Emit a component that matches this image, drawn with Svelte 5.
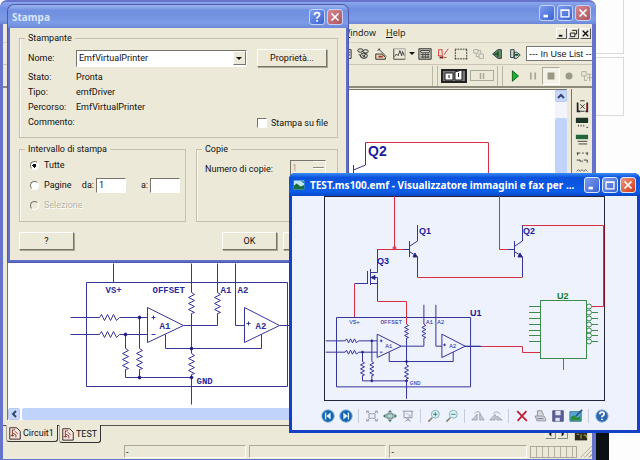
<script lang="ts">
  type Shape = { d: string; s?: string; f?: string; w?: number };

  let printer = $state("EmfVirtualPrinter");
  let toFile = $state(false);
  let range = $state("all");
  let from = $state("1");
  let to = $state("");

  // zigzag bodies of the resistors, relative paths
  const ZIG_H = "l2 -3 l3 6 l3 -6 l3 6 l3 -6 l3 6 l3 -3";
  const ZIG_V = "l3 2 l-6 3 l6 3 l-6 3 l6 3 l-6 3 l6 3 l-3 1";

  const pins = [110.5, 116.5, 122.5, 128.5, 134.5, 139.5, 145.5];

  // 16x16 toolbar glyphs
  const icons: Record<string, Shape[]> = {
    sheet: [{ d: "M9 3h6v10h-6zM10 6h4M10 9h4", s: "#222" }],
    gears: [
      { d: "M2 4a3 2 0 1 0 6 0a3 2 0 1 0-6 0M8 5a3 2 0 1 0 6 0a3 2 0 1 0-6 0M5 10a4 3 0 1 0 8 0a4 3 0 1 0-8 0", s: "#222", f: "#d8d8c8" },
      { d: "M3 8l3 3M7 9l4 3M11 8l-3 4", s: "#222" },
    ],
    wizard: [{ d: "M5 2l9 9M4 4l3-2M2 8h7l4 4v2H2z", s: "#222", f: "#e8d8b0" }, { d: "M5 11h5", s: "#a33", w: 2 }],
    graph: [{ d: "M2 2v12h13M3 11l2-3 2 2 2-6 2 6 1-5 2 5", s: "#333" }, { d: "M2 2h13v12", s: "#999" }],
    calc: [
      { d: "M1 2h14v12H1z", s: "#222", f: "#c9c7b8" },
      { d: "M3 4h10v2H3z", s: "#333", f: "#fff" },
      { d: "M3 8.500h10M3 11.500h10", s: "#333" },
      { d: "M5.500 7v6M8.500 7v6M11.500 7v6", s: "#444" },
    ],
    erc: [{ d: "M3 3v7M3 3h4v6M2 10h6v3M9 9l5-7M9 12h3", s: "#c33" }, { d: "M4 12h4", s: "#622", w: 2 }],
    area: [{ d: "M1 2.500h2m1 0h2m1 0h2m1 0h2m1 0h2M1 13.500h2m1 0h2m1 0h2m1 0h2m1 0h2M1.500 3v2m0 1v2m0 1v2m0 1v2M14.500 3v2m0 1v2m0 1v2m0 1v2", s: "#222" }],
    copy: [{ d: "M2 3h5v4H2zM8 8h5v5H8zM5 7v4h3M10 8V4H7", s: "#aaa89a" }],
    back: [{ d: "M13 3h-4l-6 5 6 5h4z", s: "#234", f: "#6a8a6a" }, { d: "M5 8h5M9 5v6", s: "#175a2a", w: 2 }],
    forward: [{ d: "M3 3h4v9H3zM7 6h3l4 3-4 4H7z", s: "#234", f: "#cdd8c4" }, { d: "M8 9h4", s: "#175a2a", w: 2 }],
    play: [{ d: "M5 2l7 6-7 6z", s: "#0a5a14", f: "#16b32c" }],
    pause: [{ d: "M5.500 4v8M10.500 4v8", s: "#aaa899", w: 2 }],
    stop: [{ d: "M4 4h8v8H4z", f: "#9a9888" }],
    record: [{ d: "M4 8a4 4 0 1 0 8 0a4 4 0 1 0-8 0", f: "#9a9888" }],
    step: [{ d: "M2 3h5v5H2zM8 6h5M8 10h6M5 8v5h3M11 6v8", s: "#aaa89a" }],
    first: [{ d: "M1 8a7 7 0 1 0 14 0a7 7 0 1 0-14 0", f: "#1765ad", s: "#5f9bd0" }, { d: "M11 4v8L6 8zM4.500 4h1.500v8h-1.500z", f: "#dff4ff" }],
    last: [{ d: "M1 8a7 7 0 1 0 14 0a7 7 0 1 0-14 0", f: "#1765ad", s: "#5f9bd0" }, { d: "M5 4v8l5-4zM10 4h1.500v8H10z", f: "#dff4ff" }],
    fit: [{ d: "M2 5V2.500h3M11 2.500h3V5M2 11v2.500h3M11 13.500h3V11M4.500 5.500h7v5h-7zM2 2l3 3M14 2l-3 3M2 14l3-3M14 14l-3-3", s: "#8b929c" }],
    actual: [{ d: "M4.500 5.500h7v5h-7z", s: "#567", f: "#b8dcc8" }, { d: "M0 8l3-2.500v5zM16 8l-3-2.500v5zM8 1l2.500 3h-5zM8 15l2.500-3h-5z", f: "#3d7a6a" }],
    slide: [{ d: "M2 2.500h12M3.500 3v7h9V3M8 10v3M5 14l3-2 3 2", s: "#858c98" }, { d: "M6 5l5 3-5 3", s: "#a8afba" }],
    zoomIn: [{ d: "M6 10L1.500 14.500", s: "#8a8578", w: 2 }, { d: "M5 6a4.500 4.500 0 1 0 9 0a4.500 4.500 0 1 0-9 0", s: "#7fa7b4", f: "#dff3f6" }, { d: "M7 6h5M9.500 3.500v5", s: "#24727a" }],
    zoomOut: [{ d: "M6 10L1.500 14.500", s: "#8a8578", w: 2 }, { d: "M5 6a4.500 4.500 0 1 0 9 0a4.500 4.500 0 1 0-9 0", s: "#7fa7b4", f: "#dff3f6" }, { d: "M7 6h5", s: "#24727a" }],
    rotR: [{ d: "M1 12.500h6L7 6zM10 5v7.500h5z", s: "#999ea8", f: "#c9cdd6" }, { d: "M4 5q4-4 7 0", s: "#999ea8" }],
    rotL: [{ d: "M1 12.500h6L7 6zM9 12.500h6L9 8z", s: "#999ea8", f: "#c9cdd6" }, { d: "M5 5q4-4 8 1", s: "#999ea8" }],
    del: [{ d: "M2.500 2.500l11 11M13 2.500l-10 11", s: "#c01c30", w: 2 }],
    print: [{ d: "M5 8V2h5l2 5M2.500 8h10l2 3v2.500h-10z", s: "#888d96", f: "#d5d7dc" }, { d: "M5 11h7", s: "#70757e" }],
    save: [{ d: "M2 2h12v12H2z", f: "#5a5f94", s: "#484c80" }, { d: "M5 2h6v5H5zM5 10h5v4H5z", f: "#dfe3f2" }],
    edit: [
      { d: "M1 3h13v11H1z", f: "#58a7d8", s: "#357b8d" },
      { d: "M2 13V9l4-2 4 3 3-2v5z", f: "#2f8a3c" },
      { d: "M8 8l7-7", s: "#25558a", w: 2 },
    ],
    help: [{ d: "M1 8a7 7 0 1 0 14 0a7 7 0 1 0-14 0", f: "#2c68ae", s: "#7fa9d6" }, { d: "M5.500 6q0-2.500 2.500-2.500t2.500 2.200q0 1.500-2.500 2.800v1M8 11v1.500", s: "#fff", w: 2 }],
    bjt: [{ d: "M3 4v10h3M14 4v10h-2", s: "#222", w: 2 }, { d: "M6 2h5M6 6l5 5M11 6l-5 5M6 14h5", s: "#222" }, { d: "M13.500 5v8", s: "#b44" }],
    chipDark: [{ d: "M1 2h14v6H1z", f: "#1d3325" }, { d: "M4 10v2M7 10v2M10 10v2M13 13h2", s: "#333" }],
    chipGreen: [{ d: "M1 2h14v5H1z", f: "#23663a" }, { d: "M3 9.500h11M4 12.500h10", s: "#333" }],
    pads: [{ d: "M3 3v3M2 3.500h4M8 3.500h2M12 3.500h3M14 3v3M2 11.500h4v2M8 12v2M10 11.500h4v3", s: "#333" }],
    mesh: [{ d: "M2 5l2-2 2 2 2-2 2 2 2-2 2 2M2 9l2-2 2 2 2-2 2 2 2-2 2 2", s: "#555" }],
    meter: [{ d: "M1 4h14v9H1z", f: "#2a2a1c" }, { d: "M3 6h3M8 6v5M11 7h3v3", s: "#c9c14a" }],
    doc: [{ d: "M2 2h8l4 4v9H2z", s: "#2a1414", f: "#f3e6dc" }, { d: "M5 4v8M5 5l3-1M5 8l4 2v3M8 6l3 3M3 11h4", s: "#8a2f2f" }],
    picture: [{ d: "M1 2h14v12H1z", f: "#bfe4ef" }, { d: "M1 14V9l4-3 5 4 5-2v6z", f: "#16703f" }, { d: "M1 3h9l5 3v-3z", f: "#1f8f86" }],
  };

  const mainTools = ["sheet", "gears", "wizard", "graph", "|", "calc", "erc", "area", "copy", "back", "forward"];
  const simTools = ["play", "pause", "stop", "record", "step"];
  const partTools = ["bjt", "chipDark", "chipGreen", "pads", "mesh"];
  const viewTools = [
    "first", "last", "|", "fit", "actual", "slide", "|", "zoomIn", "zoomOut", "|",
    "rotR", "rotL", "|", "del", "print", "save", "edit", "|", "help",
  ];
</script>

{#snippet icon(name: string)}
  <svg class="icon" viewBox="0 0 16 16" aria-hidden="true">
    {#each icons[name] as p}
      <path d={p.d} fill={p.f ?? "none"} stroke={p.s ?? "none"} stroke-width={p.w ?? 1} />
    {/each}
  </svg>
{/snippet}

{#snippet winButtons()}
  <div class="win-buttons">
    <button class="wb" aria-label="Minimize"><svg viewBox="0 0 16 16"><path d="M4 11.500h5" stroke-width="3" /></svg></button>
    <button class="wb" aria-label="Maximize"><svg viewBox="0 0 16 16"><path d="M3.500 4.500h9v8h-9zM3 5h10" stroke-width="1.500" /></svg></button>
    <button class="wb close" aria-label="Close"><svg viewBox="0 0 16 16"><path d="M4 4l8 8M12 4l-8 8" stroke-width="2" /></svg></button>
  </div>
{/snippet}

<!-- Instrumentation amplifier, 201x104 body with its pins -->
{#snippet amplifier()}
  <g class="amp">
    <rect x="0" y="0" width="201" height="104" />
    <path d="M27 -19V0" />
    <path d="M105 -19V10{ZIG_V}V71{ZIG_V}V122" />
    <path d="M131 -19V10{ZIG_V}V43H97" />
    <path d="M149 -19V43H158" />
    <path d="M-16 35H13{ZIG_H}H61" />
    <path d="M-16 52H13{ZIG_H}H61" />
    <path d="M39 52V66{ZIG_V}V95H105" />
    <path d="M53 35V66{ZIG_V}V95" />
    <path d="M61 25V60L97 43Z" />
    <path d="M158 25V60L193 43ZM193 43H216" />
    <path d="M79 52V66H175V52" />
    <circle cx="53" cy="35" r="1.500" />
    <circle cx="39" cy="52" r="1.500" />
    <circle cx="53" cy="95" r="1.500" />
    <circle cx="105" cy="66" r="1.500" />
    <circle cx="105" cy="95" r="1.500" />
    <text x="19" y="10">VS+</text>
    <text x="66" y="10">OFFSET</text>
    <text x="134" y="10">A1</text>
    <text x="151" y="10">A2</text>
    <text x="73" y="46">A1</text>
    <text x="169" y="46">A2</text>
    <text x="110" y="101">GND</text>
    <path d="M65 35h4M67 33v4M65 52h4M160 41h4M162 39v4" />
  </g>
{/snippet}

{#snippet transistor(x: number)}
  <g class="blue" transform="translate({x} 0)">
    <path d="M-6 53.500H0M0.500 45V61M1 50L8.500 45V29M1 56L8.500 60.500V81" />
    <path class="solid" d="M8 61l-4 0l2 -4z" />
  </g>
{/snippet}

<div class="desktop">
  <div class="ghost one"></div>
  <div class="ghost two"></div>
  <div class="wall"></div>

  <main class="app">
    <header class="titlebar app-title">{@render winButtons()}</header>
    <nav class="menubar">
      <a href="#window"><u>W</u>indow</a>
      <a href="#help"><u>H</u>elp</a>
      <div class="mdi">
        <button aria-label="Minimize document"><svg viewBox="0 0 10 10"><path d="M2 7.500h4" stroke-width="2" /></svg></button>
        <button aria-label="Restore document"><svg viewBox="0 0 10 10"><path d="M3.500 1.500h5v4h-2M1.500 4.500h5v4h-5z" /></svg></button>
        <button aria-label="Close document"><svg viewBox="0 0 10 10"><path d="M2 2l6 6M8 2l-6 6" stroke-width="1.500" /></svg></button>
      </div>
    </nav>
    <div class="toolbar">
      {#each mainTools as t}
        {#if t === "|"}
          <span class="drop"></span>
        {:else}
          <button class="tool" aria-label={t}>{@render icon(t)}</button>
        {/if}
      {/each}
      <select class="in-use" aria-label="In use list"><option>--- In Use List ---</option></select>
    </div>
    <div class="toolbar sim">
      <span class="grip"></span>
      <button class="switch" aria-label="Simulation switch">
        <svg viewBox="0 0 26 14">
          <path d="M1 1h24v12H1z" fill="#777" stroke="#222" stroke-width="2" />
          <path d="M4 4h8v7H4zM14 3l7-2v10h-7z" fill="#fff" stroke="#222" />
          <path d="M8 6v3M17.500 4v4" stroke="#222" />
        </svg>
      </button>
      <button class="hold" aria-label="Pause simulation"><svg viewBox="0 0 12 10"><path d="M4.500 2v6M7.500 2v6" stroke="#aaa899" stroke-width="1.500" /></svg></button>
      <span class="grip"></span>
      {#each simTools as t}
        <button class="tool" class:sunken={t === "stop"} aria-label={t}>{@render icon(t)}</button>
      {/each}
    </div>

    <div class="workspace">
      <div class="document">
        <div class="sheet">
          <svg class="schematic">
            <g transform="translate(78.500 192.500)">{@render amplifier()}</g>
            <path class="red" d="M357.500 52.500H480.500V120" />
            <path class="blue" d="M357.500 52.500V75L345.500 80M345.500 75V100" />
            <text class="ref" x="360" y="66">Q2</text>
          </svg>
          <div class="vscroll">
            <button aria-label="Scroll up"><svg viewBox="0 0 10 10"><path d="M2 7l3-3 3 3" /></svg></button>
            <span class="vthumb"></span>
          </div>
        </div>
        <div class="hscroll">
          <button aria-label="Scroll left"><svg viewBox="0 0 10 10"><path d="M7 2L4 5l3 3" /></svg></button>
          <span class="hthumb"></span>
        </div>
      </div>
      <aside class="parts">
        {#each partTools as t}
          <button class="tool" aria-label={t}>{@render icon(t)}</button>
        {/each}
      </aside>
    </div>

    <div class="tabs">
      <button class="tab">{@render icon("doc")}Circuit1</button>
      <button class="tab active">{@render icon("doc")}TEST</button>
      <div class="tab-scroll">
        <button aria-label="Previous tab"><svg viewBox="0 0 10 10"><path d="M6 2v6L3 5z" /></svg></button>
        <button aria-label="Next tab"><svg viewBox="0 0 10 10"><path d="M4 2v6l3-3z" /></svg></button>
      </div>
      <button class="tool meter" aria-label="meter">{@render icon("meter")}</button>
    </div>
    <footer class="status">
      <span class="cell lead"></span>
      <span class="cell">-</span>
      <span class="cell"></span>
      <span class="cell">-</span>
      <span class="ticks"></span>
      <span class="resize"></span>
    </footer>
  </main>

  <form class="dialog" onsubmit={(e) => e.preventDefault()}>
    <header class="titlebar dialog-title">
      <h1>Stampa</h1>
      <div class="win-buttons">
        <button type="button" class="wb" aria-label="Help"><svg viewBox="0 0 16 16"><path d="M5 6q0-3 3-3t3 2.500q0 1.500-3 3.500v1M8 11.500v2" stroke-width="2" /></svg></button>
        <button type="button" class="wb close" aria-label="Close"><svg viewBox="0 0 16 16"><path d="M4 4l8 8M12 4l-8 8" stroke-width="2" /></svg></button>
      </div>
    </header>
    <div class="dialog-body">
      <fieldset class="printer">
        <legend>Stampante</legend>
        <label for="printer">Nome:</label>
        <div class="combo">
          <select id="printer" bind:value={printer}><option>EmfVirtualPrinter</option></select>
          <span class="combo-btn"></span>
        </div>
        <button type="button" class="push">Proprietà...</button>
        <span>Stato:</span><span class="wide">Pronta</span>
        <span>Tipo:</span><span class="wide">emfDriver</span>
        <span>Percorso:</span><span class="wide">EmfVirtualPrinter</span>
        <span>Commento:</span><span></span>
        <label class="check"><input type="checkbox" bind:checked={toFile} />Stampa su file</label>
      </fieldset>
      <div class="columns">
        <fieldset class="range">
          <legend>Intervallo di stampa</legend>
          <label class="radio"><input type="radio" value="all" bind:group={range} />Tutte</label>
          <div class="pages">
            <label class="radio"><input type="radio" value="pages" bind:group={range} />Pagine</label>
            <label class="bound" for="from">da:</label><input id="from" class="num" bind:value={from} />
            <label class="bound" for="to">a:</label><input id="to" class="num" bind:value={to} />
          </div>
          <label class="radio off"><input type="radio" value="sel" disabled bind:group={range} />Selezione</label>
        </fieldset>
        <fieldset class="copies">
          <legend>Copie</legend>
          <label for="copies">Numero di copie:</label>
          <div class="spin">
            <input id="copies" value="1" disabled />
            <span class="spin-btns"></span>
          </div>
        </fieldset>
      </div>
      <div class="actions">
        <button type="button" class="push">?</button>
        <button type="submit" class="push ok">OK</button>
        <button type="button" class="push" aria-label="Annulla"></button>
      </div>
    </div>
  </form>

  <section class="viewer">
    <header class="titlebar viewer-title">
      {@render icon("picture")}
      <h2>TEST.ms100.emf - Visualizzatore immagini e fax per ...</h2>
      {@render winButtons()}
    </header>
    <div class="viewer-body">
      <svg class="preview" viewBox="0 0 281 205">
        <rect class="page" x="0.500" y="0.500" width="280" height="204" />
        <g transform="translate(12.500 121.500) scale(0.667)">{@render amplifier()}</g>
        {@render transistor(85)}
        {@render transistor(190)}
        <g class="blue">
          <path d="M53.500 53V76.500H46M46.500 73V89M43.500 75V88M46 81.500H53.500V105M46 87.500H53.500M30.500 87.500H43" />
          <path class="solid" d="M47 81.500l4 -2v4z" />
          <path d="M141 150.500H158" />
        </g>
        <g class="red">
          <path d="M70.500 0V53.500M53.500 53.500H79" />
          <circle cx="70.500" cy="52" r="1.500" />
          <path d="M175.500 0V53.500H184M93.500 81.500H198.500" />
          <path d="M198.500 29.500H279.500V110.500H268" />
          <path class="dark" d="M280.500 29V111" />
          <path d="M30.500 88V121M53.500 105.500H82.500V128" />
          <path d="M157 150.500H198.500V156.500H216" />
        </g>
        <g class="green">
          <rect x="216.500" y="104.500" width="46" height="58" />
          {#each pins as y, i}
            <path d="M205 {y}H216" />
            <circle cx="265" cy={y} r="2.500" />
            {#if i > 0}<path d="M268 {y}H274" />{/if}
          {/each}
          <path d="M239.500 162V174" />
        </g>
        <text class="ref" x="95" y="38">Q1</text>
        <text class="ref" x="199" y="38">Q2</text>
        <text class="ref" x="53" y="68">Q3</text>
        <text class="ref" x="146" y="120">U1</text>
        <text class="ref chip" x="233" y="103">U2</text>
      </svg>
      <div class="viewer-tools">
        {#each viewTools as t}
          {#if t === "|"}
            <span class="sep"></span>
          {:else}
            <button aria-label={t}>{@render icon(t)}</button>
          {/if}
        {/each}
      </div>
    </div>
  </section>
</div>

<style>
  :global(body) {
    margin: 0;
    background: #fdfdfe;
  }
  .desktop {
    position: relative;
    min-height: 100vh;
    overflow: hidden;
    font-family: "Roboto", sans-serif;
    font-size: 9px;
    line-height: 12px;
    color: #111;
  }
  .desktop * {
    box-sizing: border-box;
  }
  button, input, select {
    font: inherit;
    color: inherit;
    margin: 0;
    padding: 0;
    border: 0;
    border-radius: 0;
    background: none;
  }
  .icon {
    display: block;
    width: 14px;
    height: 14px;
    flex: none;
  }

  /* windows and pages behind */
  .ghost {
    position: absolute;
    right: 16px;
    width: 40px;
    border: 1px solid #d9dade;
  }
  .ghost.one { top: -2px; height: 56px; }
  .ghost.two { top: 57px; height: 59px; }
  .wall {
    position: absolute;
    right: 31px;
    bottom: 0;
    width: 20px;
    height: 40px;
    background: #0b1014;
  }

  /* title bars */
  .titlebar {
    display: flex;
    align-items: center;
    flex: none;
  }
  .win-buttons {
    display: flex;
    gap: 2px;
    margin-left: auto;
  }
  .wb {
    width: 16px;
    height: 16px;
    border: 1px solid #c3d2f5;
    border-radius: 3px;
    background: linear-gradient(135deg, #7d9cee, #3a62d4);
  }
  .wb.close {
    background: linear-gradient(135deg, #d58a92, #b0525e);
  }
  .wb svg {
    display: block;
    width: 14px;
    height: 14px;
    fill: none;
    stroke: #fff;
  }

  /* main application */
  .app {
    position: relative;
    display: flex;
    flex-direction: column;
    height: 100vh;
    margin-right: 44px;
    padding: 2px 4px 1px 3px;
    background: #6773cb;
    border-radius: 7px 7px 0 0;
  }
  .app-title {
    height: 22px;
    margin: 0 -4px 0 -3px;
    padding-right: 5px;
    border-radius: 6px 6px 0 0;
    background: linear-gradient(#8aa6ec, #6f8fe0 30%, #7b9be6 80%, #6c86d6);
  }
  .menubar {
    display: flex;
    align-items: center;
    height: 19px;
    padding-left: 339px;
    gap: 10px;
    background: #ece9d8;
    border-bottom: 1px solid #d6d2c0;
    font-family: "Open Sans", sans-serif;
    flex: none;
  }
  .menubar a {
    color: inherit;
    text-decoration: none;
  }
  .mdi {
    display: flex;
    gap: 1px;
    margin-left: auto;
    padding-right: 1px;
  }
  .mdi button {
    width: 11px;
    height: 11px;
    border: 1px solid;
    border-color: #fff #555 #555 #fff;
    background: #ece9d8;
  }
  .mdi svg {
    display: block;
    width: 9px;
    height: 9px;
    fill: none;
    stroke: #111;
  }
  .toolbar {
    display: flex;
    align-items: center;
    justify-content: flex-end;
    height: 22px;
    background: #ece9d8;
    border-bottom: 1px solid #c9c5b2;
    flex: none;
  }
  .tool {
    display: flex;
    align-items: center;
    justify-content: center;
    width: 18px;
    height: 18px;
    flex: none;
  }
  .tool.sunken {
    border: 1px solid;
    border-color: #aca899 #fff #fff #aca899;
    background: #f4f2e8;
  }
  .drop {
    width: 8px;
    height: 3px;
    background: #111;
    clip-path: polygon(1px 0, 7px 0, 4px 3px);
  }
  .in-use {
    appearance: none;
    width: 66px;
    height: 15px;
    margin-left: 2px;
    padding: 0 0 0 2px;
    border: 1px solid #777;
    border-width: 1px 0 1px 1px;
    background: #fff;
    font-family: "Liberation Sans", sans-serif;
    font-size: 9px;
    overflow: hidden;
    text-overflow: clip;
    white-space: nowrap;
  }
  .sim {
    height: 23px;
    border-bottom: 2px solid #8d8a7c;
    overflow: hidden;
  }
  .sim .tool:last-child {
    margin-right: -4px;
  }
  .grip {
    width: 6px;
    height: 20px;
    margin: 0 3px;
    border: 1px solid #bab6a4;
    border-width: 0 1px;
    flex: none;
  }
  .switch svg {
    display: block;
    width: 26px;
    height: 14px;
  }
  .hold {
    display: flex;
    justify-content: center;
    align-items: center;
    width: 24px;
    height: 11px;
    margin-left: 3px;
    border: 1px solid #aaa899;
  }
  .hold svg {
    width: 12px;
    height: 10px;
  }

  .workspace {
    display: flex;
    flex: 1;
    min-height: 0;
    padding: 1px 0 0 4px;
    background: #ece9d8;
  }
  .document {
    display: flex;
    flex-direction: column;
    flex: 1;
    min-width: 0;
    margin-right: 4px;
    border: 1px solid #77756a;
    border-width: 1px 0 0 1px;
    background: #fff;
  }
  .sheet {
    display: flex;
    flex: 1;
    min-height: 0;
  }
  .schematic {
    flex: 1;
    min-width: 0;
    height: 100%;
  }
  .vscroll {
    display: flex;
    flex-direction: column;
    gap: 16px;
    width: 12px;
    background: #f3f3fb;
  }
  .vscroll button, .hscroll button {
    width: 12px;
    height: 12px;
    border: 1px solid #b4c8f6;
    border-radius: 2px;
    background: #c8d8fc;
    flex: none;
  }
  .vscroll svg, .hscroll svg {
    display: block;
    width: 10px;
    height: 10px;
    fill: none;
    stroke: #33466f;
    stroke-width: 2;
  }
  .vthumb, .hthumb {
    flex: 1;
    border-radius: 2px;
    background: #bfd3fb;
  }
  .hscroll {
    display: flex;
    gap: 2px;
    height: 12px;
    flex: none;
  }
  .parts {
    display: flex;
    flex-direction: column;
    align-items: center;
    width: 21px;
    padding-top: 8px;
    border-left: 1px solid #77756a;
  }
  .parts .tool {
    height: 17px;
  }

  .tabs {
    display: flex;
    align-items: flex-start;
    height: 24px;
    padding-left: 3px;
    border-top: 5px solid #ece9d8;
    background: #ece9d8;
    box-shadow: inset 0 1px #55534a;
    flex: none;
  }
  .tab {
    display: flex;
    align-items: center;
    gap: 1px;
    height: 17px;
    padding: 0 3px 0 1px;
    border: 1px solid #333;
    border-top: 0;
    border-left-color: #aaa899;
    border-radius: 0 0 3px 3px;
    background: #ece9d8;
  }
  .tab.active {
    height: 18px;
    margin-left: 1px;
  }
  .tab-scroll {
    display: flex;
    gap: 1px;
    margin-left: auto;
    padding-top: 4px;
  }
  .tab-scroll button {
    width: 11px;
    height: 10px;
    border: 1px solid;
    border-color: #fff #888 #888 #fff;
  }
  .tab-scroll svg {
    display: block;
    width: 9px;
    height: 8px;
  }
  .meter {
    margin: 2px 2px 0 4px;
  }
  .status {
    display: flex;
    align-items: center;
    gap: 3px;
    height: 15px;
    background: #ece9d8;
    flex: none;
  }
  .cell {
    flex: 137 0 0;
    height: 13px;
    padding-left: 1px;
    border: 1px solid;
    border-color: #aca899 #fff #fff #aca899;
  }
  .cell.lead {
    flex-grow: 117;
    border-color: transparent;
  }
  .cell.lead + .cell {
    flex-grow: 121;
  }
  .ticks {
    width: 47px;
    height: 12px;
    border: 1px solid #aca899;
    background: repeating-linear-gradient(90deg, transparent 0 5px, #b5b19f 5px 6px);
  }
  .resize {
    width: 12px;
    height: 12px;
    background: repeating-linear-gradient(135deg, transparent 0 2px, #aca899 2px 3px);
    clip-path: polygon(100% 0, 100% 100%, 0 100%);
  }

  /* schematics */
  .amp, .blue, .red, .green, .page {
    fill: none;
    stroke-width: 1;
  }
  .amp, .blue {
    stroke: #35359a;
  }
  .amp * {
    vector-effect: non-scaling-stroke;
  }
  .amp circle, .solid {
    fill: #14145a;
  }
  .amp text {
    fill: #2c2c9c;
    stroke: none;
    font: bold 9px "Liberation Mono", monospace;
  }
  .red { stroke: #d62f42; }
  .dark { stroke: #7d1028; }
  .green { stroke: #3c8a4c; }
  .page { stroke: #23233c; }
  .ref {
    fill: #1c1c9c;
    font: bold 14px "Liberation Sans", sans-serif;
  }
  .preview .ref { font-size: 9px; }
  .preview .chip { fill: #157a2c; }
  .preview .amp text { font-weight: normal; }

  /* print dialog */
  .dialog {
    position: absolute;
    left: 8px;
    top: 5px;
    width: 340px;
    padding: 0 2px 2px;
    border-radius: 6px 6px 0 0;
    background: #5f6fc9;
    box-shadow: 0 0 0 1px #4c58ad;
  }
  .dialog-title {
    height: 23px;
    margin: 0 -2px;
    padding: 0 5px 0 4px;
    border-radius: 6px 6px 0 0;
    background: linear-gradient(#9db5f0, #6f8fe0 25%, #7b9be6 80%, #6c86d6);
  }
  h1, h2 {
    margin: 0;
    font: bold 10px "Noto Sans", sans-serif;
    color: #dbe5fb;
    white-space: nowrap;
  }
  .dialog-body {
    padding: 4px 8px 10px 9px;
    background: #ece9d8;
  }
  fieldset {
    min-width: 0;
    margin: 0;
    padding: 0 0 0 8px;
    border: 1px solid #c4c0ac;
    box-shadow: inset 1px 0 #fbfaf4;
  }
  legend {
    margin-left: -3px;
    padding: 0 3px;
  }
  .printer {
    display: grid;
    grid-template-columns: 48px 181px 70px;
    grid-template-rows: 22px repeat(4, 15px);
    align-items: center;
    padding-top: 3px;
    padding-bottom: 8px;
  }
  .wide {
    grid-column: 2 / 4;
  }
  .combo {
    position: relative;
    width: 171px;
  }
  .combo select {
    appearance: none;
    display: block;
    width: 100%;
    height: 17px;
    padding-left: 2px;
    border: 1px solid;
    border-color: #77756a #fff #fff #77756a;
    background: #fff;
  }
  .combo-btn {
    position: absolute;
    right: 1px;
    top: 1px;
    width: 13px;
    height: 14px;
    border: 1px solid;
    border-color: #fff #77756a #77756a #fff;
    background: #ece9d8;
    pointer-events: none;
  }
  .combo-btn::after {
    content: "";
    position: absolute;
    left: 2px;
    top: 5px;
    border: 3px solid transparent;
    border-top-color: #111;
  }
  .push {
    height: 18px;
    border: 1px solid;
    border-color: #fff #77756a #77756a #fff;
    background: #ece9d8;
    box-shadow: 1px 1px #a9a695;
  }
  .check, .radio {
    display: flex;
    align-items: center;
    gap: 5px;
    white-space: nowrap;
  }
  .check {
    padding-top: 3px;
    gap: 4px;
  }
  .check input {
    appearance: none;
    width: 10px;
    height: 10px;
    border: 1px solid;
    border-color: #77756a #fff #fff #77756a;
    background: #fff;
    flex: none;
  }
  .check input:checked {
    background: #444;
  }
  .columns {
    display: grid;
    grid-template-columns: 167px 1fr;
    gap: 10px;
    margin-top: 5px;
  }
  .range {
    display: flex;
    flex-direction: column;
    padding: 0 0 6px 10px;
  }
  .range legend {
    margin-left: -5px;
  }
  .radio {
    height: 20px;
  }
  .radio input {
    appearance: none;
    width: 9px;
    height: 9px;
    border: 1px solid;
    border-color: #77756a #fff #fff #77756a;
    border-radius: 50%;
    background: #fff;
    flex: none;
  }
  .radio input:checked {
    background: radial-gradient(circle, #111 0 2px, #fff 2px);
  }
  .radio.off {
    color: #b7b4a3;
    text-shadow: 1px 1px #fff;
  }
  .radio.off input {
    background: #ece9d8;
  }
  .pages {
    display: flex;
    align-items: center;
  }
  .bound {
    width: 24px;
    padding-right: 2px;
    text-align: right;
  }
  .pages .radio {
    width: 42px;
  }
  .num {
    width: 30px;
    height: 15px;
    padding-left: 2px;
    border: 1px solid;
    border-color: #77756a #fff #fff #77756a;
    background: #fff;
  }
  .copies {
    display: flex;
    gap: 22px;
    padding-top: 5px;
  }
  .copies label {
    width: 63px;
    padding-top: 3px;
    white-space: nowrap;
  }
  .spin {
    display: flex;
    height: 16px;
    width: 36px;
    border: 1px solid;
    border-color: #77756a #fff #fff #77756a;
  }
  .spin input {
    width: 22px;
    padding-left: 1px;
    color: #a5a292;
  }
  .spin-btns {
    width: 11px;
    background: linear-gradient(#fff 1px, #ece9d8 1px 6px, #8d8a7c 6px 7px, #fff 7px 8px, #ece9d8 8px);
  }
  .actions {
    display: flex;
    gap: 6px;
    padding-top: 10px;
  }
  .actions .push {
    width: 55px;
  }
  .ok {
    margin-left: auto;
  }

  /* picture viewer */
  .viewer {
    position: absolute;
    right: 0;
    top: 173px;
    width: 351px;
    padding: 0 3px 3px;
    border-radius: 6px 6px 0 0;
    background: #1340c4;
  }
  .viewer-title {
    gap: 5px;
    height: 23px;
    margin: 0 -3px;
    padding: 0 4px;
    border-radius: 6px 6px 0 0;
    background: linear-gradient(#3b8bf8, #0a52dc 20%, #0c5de8 80%, #0846c8);
  }
  .viewer-title .icon {
    width: 12px;
    height: 12px;
  }
  .viewer-title h2 {
    color: #fff;
  }
  .viewer .wb {
    border-color: #dbe6fb;
  }
  .viewer .wb.close {
    background: linear-gradient(135deg, #f0977c, #cf3a16);
  }
  .viewer-body {
    display: flex;
    flex-direction: column;
    align-items: center;
    background: #edf2fc;
  }
  .preview {
    display: block;
    width: 281px;
    height: 205px;
  }
  .viewer-tools {
    display: flex;
    align-items: center;
    gap: 2px;
    height: 29px;
  }
  .viewer-tools button {
    display: flex;
    align-items: center;
    justify-content: center;
    width: 16px;
    height: 18px;
  }
  .viewer-tools .sep {
    width: 1px;
    height: 14px;
    margin: 0 3px 0 2px;
    background: #c6ccda;
  }
</style>
